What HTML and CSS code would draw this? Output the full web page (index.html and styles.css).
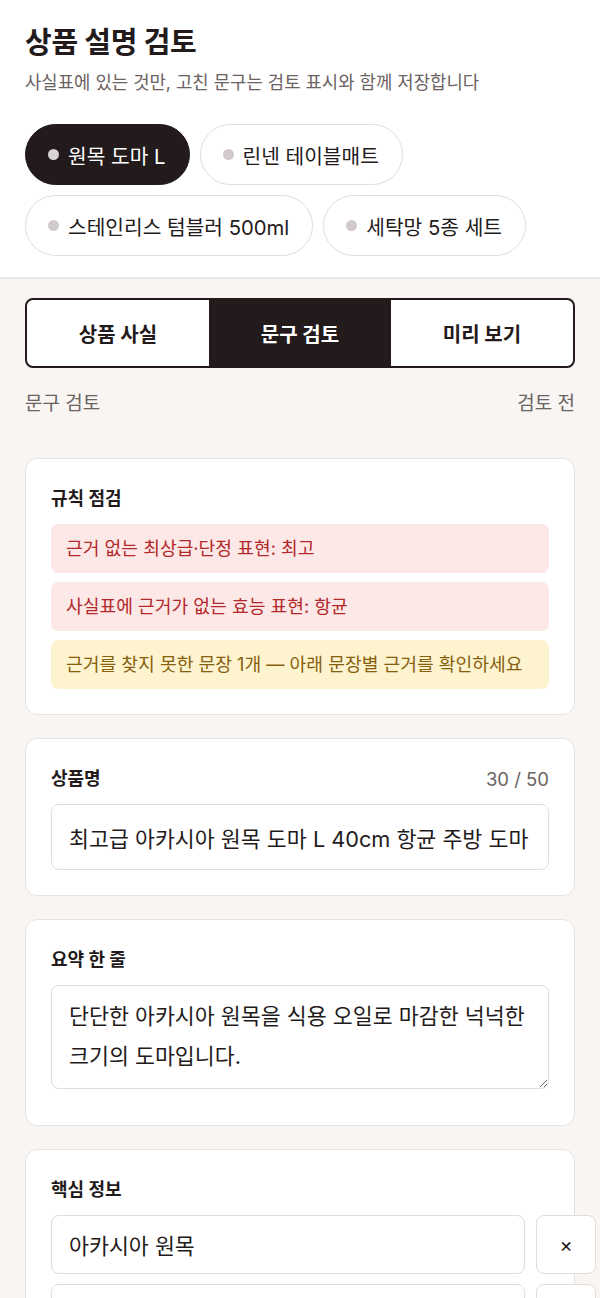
FILE: index.html
```html
<!DOCTYPE html>
<html lang="ko">
<head>
<meta charset="utf-8">
<title>상품 설명 검토</title>
<link rel="stylesheet" href="styles.css">
</head>
<body>
<header class="top">
  <h1 class="title">상품 설명 검토</h1>
  <p class="subtitle">사실표에 있는 것만, 고친 문구는 검토 표시와 함께 저장합니다</p>
  <div class="chips">
    <button class="chip chip-active"><span class="dot"></span>원목 도마 L</button>
    <button class="chip"><span class="dot"></span>린넨 테이블매트</button>
    <button class="chip"><span class="dot"></span>스테인리스 텀블러 500ml</button>
    <button class="chip"><span class="dot"></span>세탁망 5종 세트</button>
  </div>
</header>
<main class="body">
  <nav class="tabs">
    <button class="tab">상품 사실</button>
    <button class="tab tab-active">문구 검토</button>
    <button class="tab">미리 보기</button>
  </nav>
  <div class="section-head">
    <span>문구 검토</span>
    <span>검토 전</span>
  </div>

  <section class="card card-first">
    <h2 class="card-label">규칙 점검</h2>
    <ul class="alerts">
      <li class="alert alert-red">근거 없는 최상급·단정 표현: 최고</li>
      <li class="alert alert-red">사실표에 근거가 없는 효능 표현: 항균</li>
      <li class="alert alert-yellow">근거를 찾지 못한 문장 1개 — 아래 문장별 근거를 확인하세요</li>
    </ul>
  </section>

  <section class="card">
    <div class="card-row">
      <h2 class="card-label">상품명</h2>
      <span class="counter">30 / 50</span>
    </div>
    <input class="field" type="text" value="최고급 아카시아 원목 도마 L 40cm 항균 주방 도마">
  </section>

  <section class="card">
    <h2 class="card-label">요약 한 줄</h2>
    <textarea class="field area">단단한 아카시아 원목을 식용 오일로 마감한 넉넉한 크기의 도마입니다.</textarea>
  </section>

  <section class="card">
    <h2 class="card-label">핵심 정보</h2>
    <div class="kv-list">
      <div class="kv-row">
        <input class="field kv-field" type="text" value="아카시아 원목">
        <button class="remove">×</button>
      </div>
      <div class="kv-row">
        <input class="field kv-field" type="text" value="">
        <button class="remove">×</button>
      </div>
    </div>
  </section>
</main>
</body>
</html>
```

FILE: styles.css
```css
* { box-sizing: border-box; }
html, body { margin: 0; padding: 0; }
body {
  background: #f8f5f2;
  color: #231a1b;
  font-family: Inter, "Noto Sans CJK KR", sans-serif;
  width: 600px;
  overflow: hidden;
}
button, input, textarea { font-family: inherit; color: inherit; }

.top {
  background: #ffffff;
  padding: 24px 25px 21px;
  border-bottom: 2px solid #ebe6e4;
}
.title {
  margin: 0;
  font-size: 29px;
  line-height: 38px;
  font-weight: 700;
  letter-spacing: -0.3px;
}
.subtitle {
  margin: 9px 0 0;
  font-size: 17.8px;
  line-height: 24px;
  color: #6b6262;
}
.chips {
  display: flex;
  flex-wrap: wrap;
  gap: 10px;
  margin-top: 29px;
}
.chip {
  display: flex;
  align-items: center;
  gap: 9px;
  height: 61px;
  padding: 0 23px 0 22px;
  border: 1.5px solid #e3dddb;
  border-radius: 31px;
  background: #ffffff;
  font-size: 20.3px;
}
.chip-active {
  background: #231a1b;
  border-color: #231a1b;
  color: #ffffff;
}
.dot {
  width: 11px;
  height: 11px;
  border-radius: 50%;
  background: #d2c9ca;
}
.chip-active .dot { background: #d9d2d2; }

.body { padding: 19px 25px 0; }

.tabs {
  display: grid;
  grid-template-columns: 1fr 1fr 1fr;
  height: 70px;
  border: 2px solid #231a1b;
  border-radius: 8px;
  overflow: hidden;
  background: #ffffff;
}
.tab {
  border: 0;
  background: transparent;
  font-size: 20px;
  font-weight: 700;
}
.tab-active { background: #231a1b; color: #ffffff; }

.section-head {
  display: flex;
  justify-content: space-between;
  margin-top: 23px;
  font-size: 19px;
  line-height: 26px;
  color: #6b6262;
}

.card {
  background: #ffffff;
  border: 1.5px solid #e8e3e1;
  border-radius: 12px;
  padding: 27px 25px 25px;
  margin-top: 23px;
}
.card-first { margin-top: 41px; }
.card-label {
  margin: 0;
  font-size: 18px;
  line-height: 25px;
  font-weight: 700;
}
.card-row {
  display: flex;
  justify-content: space-between;
  align-items: center;
}
.counter {
  font-size: 18.5px;
  color: #6b6262;
}

.alerts {
  list-style: none;
  margin: 13px 0 0;
  padding: 0;
  display: flex;
  flex-direction: column;
  gap: 9px;
}
.alert {
  border-radius: 7px;
  padding: 12px 15px;
  font-size: 18.2px;
  line-height: 25px;
}
.alert-red { background: #fde8e8; color: #b3282a; }
.alert-yellow { background: #fef3cf; color: #86600c; }

.field {
  display: block;
  width: 100%;
  margin-top: 13px;
  height: 66px;
  padding: 0 17px;
  border: 1.5px solid #e2dcda;
  border-radius: 8px;
  background: #ffffff;
  font-size: 21.7px;
  outline: none;
}
.area {
  height: 104px;
  padding: 10px 17px;
  line-height: 40px;
  resize: vertical;
  word-break: keep-all;
  margin-bottom: 11px;
}
.kv-list {
  display: flex;
  flex-direction: column;
  gap: 10px;
  margin-top: 13px;
}
.kv-row {
  display: grid;
  grid-template-columns: minmax(474px, 1fr) 60px;
  gap: 11px;
}
.kv-field { margin-top: 0; height: 59px; }
.remove {
  height: 59px;
  border: 1.5px solid #e2dcda;
  border-radius: 8px;
  background: #ffffff;
  font-size: 20px;
  padding: 0;
}
```
